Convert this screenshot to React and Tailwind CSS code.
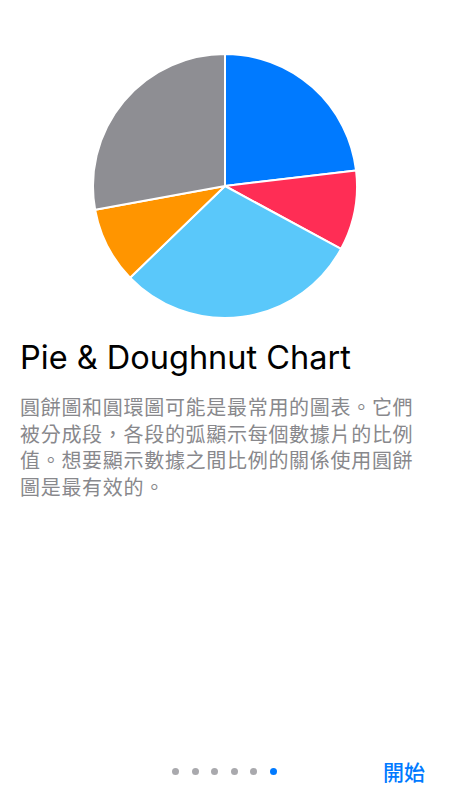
import React from 'react';

const slices = [
  { value: 83.3, color: '#007AFF' },
  { value: 35.2, color: '#FF2D55' },
  { value: 107.5, color: '#5AC8FA' },
  { value: 33.6, color: '#FF9500' },
  { value: 100.4, color: '#8E8E93' },
];

const lines = [
  '圓餅圖和圓環圖可能是最常用的圖表。它們',
  '被分成段，各段的弧顯示每個數據片的比例',
  '值。想要顯示數據之間比例的關係使用圓餅',
  '圖是最有效的。',
];

function PieChart() {
  const size = 268;
  const c = size / 2;
  const r = 132;
  const total = slices.reduce((sum, s) => sum + s.value, 0);
  let start = 0;

  const point = (deg) => {
    const rad = (deg * Math.PI) / 180;
    return [c + r * Math.sin(rad), c - r * Math.cos(rad)];
  };

  return (
    <svg width={size} height={size} viewBox={`0 0 ${size} ${size}`}>
      {slices.map((s, i) => {
        const sweep = (s.value / total) * 360;
        const [x1, y1] = point(start);
        const [x2, y2] = point(start + sweep);
        const large = sweep > 180 ? 1 : 0;
        start += sweep;
        return (
          <path
            key={i}
            d={`M${c},${c} L${x1},${y1} A${r},${r} 0 ${large} 1 ${x2},${y2} Z`}
            fill={s.color}
            stroke="#ffffff"
            strokeWidth="2"
            strokeLinejoin="round"
          />
        );
      })}
    </svg>
  );
}

export default function App() {
  return (
    <div className="flex h-[800px] w-[449px] flex-col bg-white font-['Liberation_Sans','Noto_Sans_CJK_TC',sans-serif]">
      <div className="mt-[52px] flex justify-center pl-[1px]">
        <PieChart />
      </div>

      <h1 className="mt-[18px] px-5 font-['Inter',sans-serif] text-[32.5px] leading-[40px] font-normal text-black">Pie &amp; Doughnut Chart</h1>

      <p className="mt-[16px] pl-5 font-['Noto_Sans_CJK_TC',sans-serif] text-[20px] leading-[26.5px] tracking-[0.7px] whitespace-nowrap text-[#88888c]">
        {lines.map((line, i) => (
          <span key={i} className="block">{line}</span>
        ))}
      </p>

      <div className="mt-auto mb-[14px] flex items-center px-6">
        <div className="flex-1" />
        <div className="flex items-center gap-[12.5px]">
          {[0, 1, 2, 3, 4].map((i) => (
            <span key={i} className="h-[7px] w-[7px] rounded-full bg-[#a9a9ad]" />
          ))}
          <span className="h-[7px] w-[7px] rounded-full bg-[#007aff]" />
        </div>
        <div className="flex flex-1 justify-end">
          <button type="button" className="font-['Noto_Sans_CJK_TC',sans-serif] text-[21px] leading-[30px] font-medium text-[#007aff]">開始</button>
        </div>
      </div>
    </div>
  );
}
